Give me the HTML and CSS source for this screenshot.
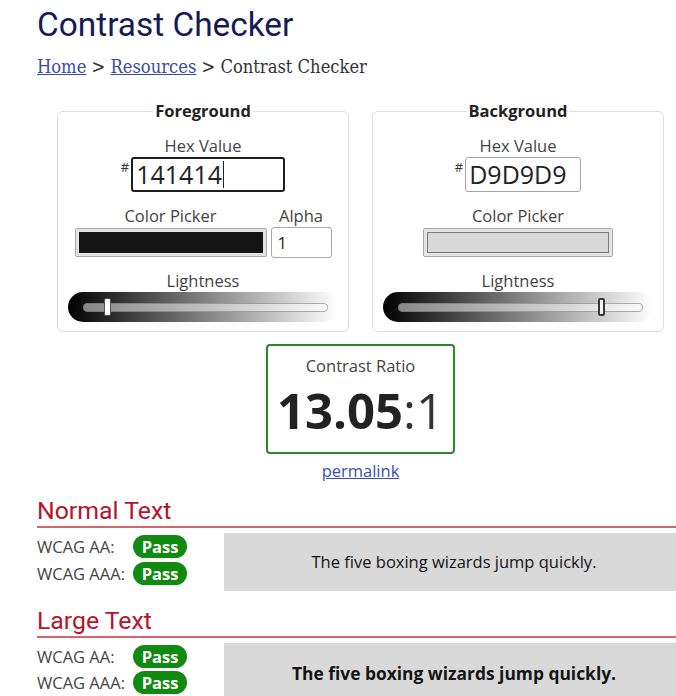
FILE: index.html
```html
<!DOCTYPE html>
<html lang="en">
<head>
<meta charset="utf-8">
<title>Contrast Checker</title>
<link rel="stylesheet" href="styles.css">
</head>
<body>
<div class="page">
  <h1 class="title">Contrast Checker</h1>
  <nav class="crumbs"><a href="#">Home</a> &gt; <a href="#">Resources</a> &gt; Contrast Checker</nav>

  <div class="pickers">
    <fieldset class="panel">
      <legend>Foreground</legend>
      <div class="label">Hex Value</div>
      <div class="hexrow">
        <span class="hash">#</span>
        <div class="hexinput hexinput-focus">141414<span class="caret"></span></div>
      </div>
      <div class="pickrow">
        <div class="col">
          <div class="label">Color Picker</div>
          <div class="swatch"><div class="fill fill-fg"></div></div>
        </div>
        <div class="col">
          <div class="label">Alpha</div>
          <div class="alpha">1</div>
        </div>
      </div>
      <div class="label label-light">Lightness</div>
      <div class="slider">
        <div class="track"></div>
        <div class="thumb" style="left:39px"></div>
      </div>
    </fieldset>

    <fieldset class="panel">
      <legend>Background</legend>
      <div class="label">Hex Value</div>
      <div class="hexrow">
        <span class="hash">#</span>
        <div class="hexinput">D9D9D9</div>
      </div>
      <div class="pickrow">
        <div class="col">
          <div class="label">Color Picker</div>
          <div class="swatch swatch-bg"><div class="fill fill-bg"></div></div>
        </div>
      </div>
      <div class="label label-light">Lightness</div>
      <div class="slider">
        <div class="track"></div>
        <div class="thumb thumb-dark" style="left:218px"></div>
      </div>
    </fieldset>
  </div>

  <div class="ratio-wrap">
    <div class="ratio">
      <div class="label">Contrast Ratio</div>
      <div class="big"><strong>13.05</strong>:1</div>
    </div>
    <a class="permalink" href="#">permalink</a>
  </div>

  <h2 class="section">Normal Text</h2>
  <div class="result">
    <div class="checks">
      <div class="check"><span class="name">WCAG AA:</span><span class="badge">Pass</span></div>
      <div class="check"><span class="name">WCAG AAA:</span><span class="badge">Pass</span></div>
    </div>
    <div class="sample">The five boxing wizards jump quickly.</div>
  </div>

  <h2 class="section">Large Text</h2>
  <div class="result">
    <div class="checks checks-large">
      <div class="check"><span class="name">WCAG AA:</span><span class="badge">Pass</span></div>
      <div class="check"><span class="name">WCAG AAA:</span><span class="badge">Pass</span></div>
    </div>
    <div class="sample sample-large">The five boxing wizards jump quickly.</div>
  </div>
</div>
</body>
</html>
```

FILE: styles.css
```css
* { box-sizing: border-box; }

html, body {
  margin: 0;
  padding: 0;
  overflow: hidden;
  background: #fff;
}

body {
  font-family: "Open Sans", "DejaVu Sans", sans-serif;
  font-size: 16.5px;
  color: #444;
}

.page {
  width: 684px;
  padding: 5px 0 0 37px;
}

.title {
  margin: 0;
  font-family: Roboto, "Liberation Sans", sans-serif;
  font-weight: 400;
  font-size: 33.4px;
  line-height: 40px;
  color: #161a55;
}

.crumbs {
  margin-top: 10px;
  font-family: "DejaVu Serif Condensed", "DejaVu Serif", serif;
  font-size: 18.2px;
  line-height: 24px;
  color: #333;
}

.crumbs a {
  color: #3b4da0;
  text-decoration: underline;
}

.pickers {
  display: flex;
  gap: 23px;
  padding: 0 20px;
  margin-top: 21px;
}

.panel {
  flex: 1;
  min-width: 0;
  margin: 0;
  padding: 13px 0 9px;
  border: 1px solid #dcdcdc;
  border-radius: 6px;
  display: flex;
  flex-direction: column;
  align-items: center;
}

.panel legend {
  margin: 0 auto;
  padding: 0 2px;
  font-weight: 700;
  font-size: 16.5px;
  line-height: 22px;
  color: #222;
}

.label {
  line-height: 22px;
  text-align: center;
  color: #444;
}

.hexrow {
  display: flex;
  align-items: flex-start;
}

.hash {
  font-size: 13px;
  line-height: 1;
  margin-top: 4px;
  margin-right: 2px;
  color: #333;
}

.hexinput {
  width: 116px;
  height: 35px;
  border: 1px solid #a5a5a5;
  border-radius: 3px;
  padding: 0 3px;
  font-size: 25px;
  line-height: 33px;
  color: #222;
  display: flex;
  align-items: center;
}

.hexinput-focus {
  width: 154px;
  border: 2px solid #1e1e1e;
  padding: 0 3px;
}

.caret {
  display: inline-block;
  width: 1px;
  height: 27px;
  background: #222;
  margin-left: 1px;
}

.pickrow {
  display: flex;
  gap: 4px;
  margin-top: 13px;
  align-items: flex-end;
}

.col {
  display: flex;
  flex-direction: column;
  align-items: center;
}

.swatch {
  width: 192px;
  height: 29px;
  margin: 1px 0;
  border: 1px solid #a8a8a8;
  border-radius: 2px;
  padding: 3px;
  background: #e4e4e4;
}

.swatch-bg {
  width: 190px;
}

.fill {
  height: 100%;
  border: 1px solid #7a7a7a;
}

.fill-fg { background: #141414; border-color: #141414; }
.fill-bg { background: #d9d9d9; }

.alpha {
  width: 61px;
  height: 31px;
  border: 1px solid #a8a8a8;
  border-radius: 3px;
  padding: 0 6px;
  line-height: 29px;
  color: #222;
}

.label-light {
  margin-top: 12px;
}

.slider {
  position: relative;
  width: 270px;
  height: 30px;
  padding: 11px 10px 0 15px;
  border-radius: 15px;
  background: linear-gradient(to right, #000 0%, #111 6%, #fff 100%);
}

.track {
  height: 9px;
  border-radius: 5px;
  background: rgba(255, 255, 255, 0.5);
  border: 1px solid rgba(110, 110, 110, 0.55);
}

.thumb {
  position: absolute;
  top: 6px;
  width: 7px;
  height: 18px;
  margin-left: -3.5px;
  background: #fff;
  border: 1px solid #555;
  border-radius: 2px;
}

.thumb-dark {
  border: 2px solid #3a3a3a;
  background: #f4f4f4;
}

.ratio-wrap {
  display: flex;
  flex-direction: column;
  align-items: center;
  margin-top: 12px;
}

.ratio {
  width: 189px;
  height: 110px;
  border: 2px solid #2a8a2a;
  border-radius: 4px;
  padding-top: 9px;
  text-align: center;
}

.big {
  margin-top: 7px;
  font-size: 49px;
  line-height: 52px;
  color: #333;
}

.big strong {
  font-weight: 700;
  color: #222;
}

.permalink {
  margin-top: 6px;
  line-height: 22px;
  color: #3a4fa8;
  text-decoration: underline;
}

.section {
  margin: 15px 0 0;
  padding-bottom: 1px;
  border-bottom: 2px solid #d8646c;
  font-family: Roboto, "Liberation Sans", sans-serif;
  font-weight: 400;
  font-size: 24.8px;
  line-height: 28px;
  color: #b5142c;
}

.result + .section {
  margin-top: 16px;
}

.result {
  display: flex;
  margin-top: 5px;
}

.checks {
  width: 187px;
  flex: none;
  padding-top: 2px;
  display: flex;
  flex-direction: column;
  gap: 4px;
}

.checks-large {
  gap: 3px;
}

.check {
  display: flex;
  align-items: center;
  height: 23px;
}

.name {
  width: 96px;
  color: #444;
}

.badge {
  width: 54px;
  height: 23px;
  border-radius: 12px;
  background: #118a11;
  color: #fff;
  font-weight: 700;
  font-size: 16.5px;
  line-height: 23px;
  text-align: center;
}

.sample {
  flex: 1;
  padding: 18px 0;
  background: #d9d9d9;
  color: #141414;
  text-align: center;
  line-height: 22px;
}

.sample-large {
  font-size: 17.4px;
  font-weight: 700;
  line-height: 25px;
}
```
